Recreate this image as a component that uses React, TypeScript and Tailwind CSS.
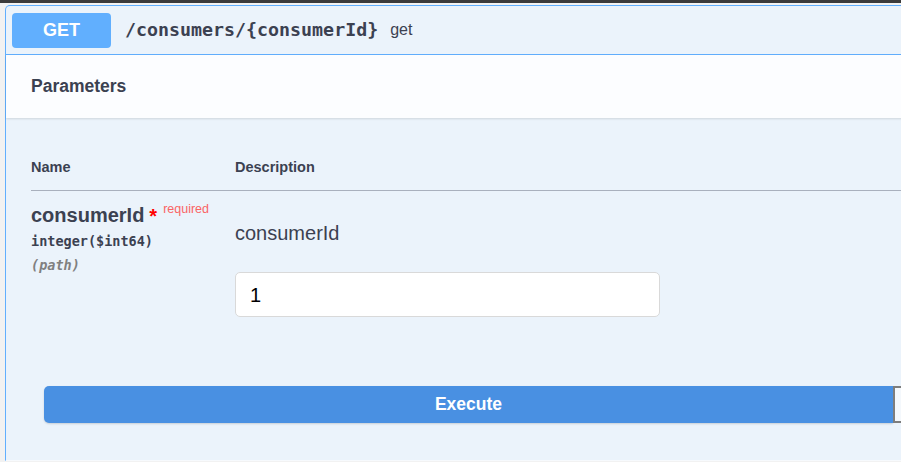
export default function App() {
  return (
    <div className="w-[901px] h-[462px] overflow-hidden bg-[#f2f2f2] relative" style={{ fontFamily: '"Liberation Sans", Arial, sans-serif' }}>
      <div className="h-[3px] bg-[#3b3b3b]" />
      <div className="ml-[5px] mt-[2px] w-[920px] border border-[#61affe] border-b-[#f7fafd] rounded-tl-[5px] bg-[#ebf3fb]">
        {/* summary */}
        <div className="flex items-center h-[49px] border-b border-[#61affe] pl-[6px]">
          <div className="w-[99px] h-[35px] rounded-[4px] bg-[#61affe] flex items-center justify-center text-white font-bold text-[18px]">
            GET
          </div>
          <span className="ml-[14px] text-[#3b4151] font-bold text-[18.3px]" style={{ fontFamily: '"DejaVu Sans Mono", monospace' }}>
            /consumers/{'{consumerId}'}
          </span>
          <span className="ml-[12px] text-[#3b4151] text-[16px]">get</span>
        </div>

        {/* parameters header */}
        <div className="h-[63px] bg-[#fcfdff] flex items-center pl-[25px] shadow-[0_1px_2px_rgba(0,0,0,0.12)]">
          <h4 className="text-[#3b4151] font-bold text-[17.5px]">Parameters</h4>
        </div>

        {/* table */}
        <div className="pl-[25px] pt-[38px]">
          <div className="flex text-[#3b4151] font-bold text-[14.5px] h-[24px] items-center">
            <div className="w-[204px]">Name</div>
            <div>Description</div>
          </div>
          <div className="h-px bg-[#a9b0bd] mt-[10px]" />
          <div className="flex pt-[12px]">
            <div className="w-[204px]">
              <div className="flex items-start">
                <span className="text-[#3b4151] font-bold text-[20px] leading-[24px]">consumerId</span>
                <span className="ml-[5px] text-[#ff0000] font-bold text-[20px] leading-[24px] mt-[1px]">*</span>
                <span className="ml-[6px] text-[#fa6464] text-[12.5px] leading-[14px] -mt-[1px]">required</span>
              </div>
              <div className="mt-[3px] text-[#3b4151] font-bold text-[13.5px] leading-[20px]" style={{ fontFamily: '"DejaVu Sans Mono", monospace' }}>
                integer($int64)
              </div>
              <div className="mt-[4px] text-[#808080] italic font-bold text-[13.5px] leading-[20px]" style={{ fontFamily: '"DejaVu Sans Mono", monospace' }}>
                (path)
              </div>
            </div>
            <div className="pt-[18px]">
              <div className="text-[#3b4151] text-[20px] leading-[24px]">consumerId</div>
              <div className="mt-[27px] w-[425px] h-[45px] bg-white border border-[#d9d9d9] rounded-[5px] flex items-center pl-[14px] text-[20px] text-black">
                1
              </div>
            </div>
          </div>
        </div>

        {/* execute */}
        <div className="flex pl-[38px] pt-[69px] pb-[37px]">
          <div className="shrink-0 w-[849px] h-[37px] rounded-l-[5px] bg-[#4990e2] shadow-[0_1px_2px_rgba(0,0,0,0.15)] flex items-center justify-center text-white font-bold text-[17.5px]">
            Execute
          </div>
          <div className="shrink-0 w-[40px] h-[37px] border-2 border-[#7d7d7d] bg-[#f4f8fc]" />
        </div>
      </div>
    </div>
  );
}
